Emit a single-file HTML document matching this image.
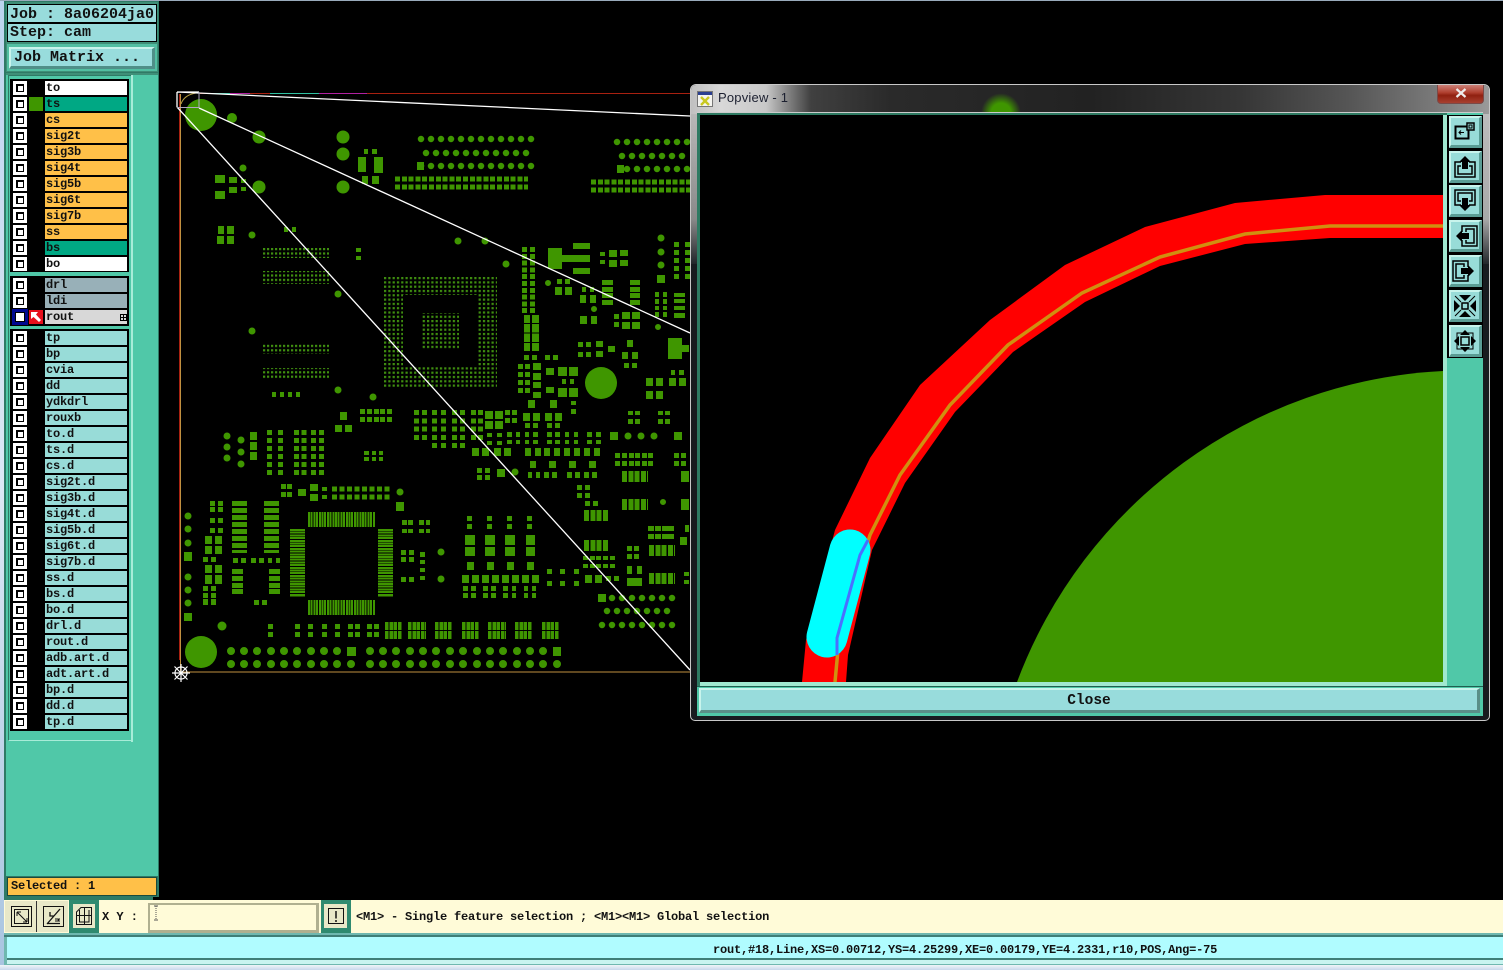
<!DOCTYPE html>
<html><head><meta charset="utf-8"><title>Popview</title>
<style>
html,body{margin:0;padding:0;background:#000;overflow:hidden}
#p{position:relative;width:1503px;height:970px;overflow:hidden;background:#000;font:bold 12px/14px "Liberation Mono",monospace;color:#111}
#p div,#p svg{position:absolute}
.t{white-space:pre;letter-spacing:-.2px}
.b{font-size:15px;line-height:18px;letter-spacing:0;white-space:pre;font-weight:bold}
.r{left:13px;width:114px;height:14px}
.r::before{content:"";position:absolute;left:0;top:0;width:14px;height:14px;box-sizing:border-box;background:#000;border:3px solid #fff}
.r::after{content:"";position:absolute;left:4.5px;top:4.5px;width:5px;height:5px;background:#fff}
.n{left:32px;top:0;width:81.500px;height:14px;padding-left:1px;box-sizing:border-box;background:#98dcd8;white-space:pre;letter-spacing:-.2px;line-height:14px}
.w{background:#fff}.g{background:#00a884}.o{background:#ffc048}.s{background:#98b0b8}.x{background:#d8d8d8}
.tb{left:1449px;width:33px;height:32px;box-sizing:border-box;background:#98dcd8;border-style:solid;border-width:2px 3px 3px 2px;border-color:#c8f4ec #5a9c94 #5a9c94 #c8f4ec}
</style></head><body><div id="p">

<!-- left desktop strip and panel -->
<div style="left:0;top:0;width:4px;height:970px;background:linear-gradient(#bcd4ee,#dce8f4 50%,#a8c4e0)"></div>
<div style="left:4px;top:0;width:155px;height:900px;background:#2f7a66"></div>
<div style="left:0;top:0;width:1503px;height:1px;background:#9ab"></div>
<div style="left:6px;top:2px;width:152px;height:70px;background:#3f8f78"></div>
<div class="b" style="left:7px;top:4px;width:150px;height:19px;box-sizing:border-box;border:1px solid #000;background:#98dcdc;padding-left:2px;line-height:19px">Job : 8a06204ja0</div>
<div class="b" style="left:7px;top:23px;width:150px;height:19px;box-sizing:border-box;border:1px solid #000;background:#98dcdc;padding-left:2px">Step: cam</div>
<div style="left:7px;top:44px;width:150px;height:27px;background:#52bfa2"></div>
<div class="b" style="left:9px;top:47px;width:146px;height:22px;box-sizing:border-box;background:#98dcdc;border-style:solid;border-width:2px 3px 3px 2px;border-color:#c8f4ec #4f8f88 #4f8f88 #c8f4ec;padding-left:3px;line-height:17px">Job Matrix ...</div>
<div style="left:6px;top:73px;width:152px;height:803px;background:#50c8a8"></div>
<div style="left:131px;top:75px;width:2px;height:667px;background:#a8ecd8"></div>
<div style="left:6px;top:73px;width:152px;height:2px;background:#3f8f78"></div>
<div style="left:8px;top:75px;width:123px;height:666px;background:#50c8a8;border:1px solid #2f7a66;border-right:0;border-bottom:1px solid #a8ecd8;box-sizing:border-box"></div>
<div style="left:10px;top:79px;width:119px;height:193px;background:#000"></div>
<div style="left:10px;top:276px;width:119px;height:50px;background:#000"></div>
<div style="left:10px;top:329px;width:119px;height:402px;background:#000"></div>

<div class="r" style="top:81px"><div class="n w">to</div></div>
<div class="r" style="top:97px"><div style="left:16px;top:0;width:14px;height:14px;background:#3f9600"></div><div class="n g">ts</div></div>
<div class="r" style="top:113px"><div class="n o">cs</div></div>
<div class="r" style="top:129px"><div class="n o">sig2t</div></div>
<div class="r" style="top:145px"><div class="n o">sig3b</div></div>
<div class="r" style="top:161px"><div class="n o">sig4t</div></div>
<div class="r" style="top:177px"><div class="n o">sig5b</div></div>
<div class="r" style="top:193px"><div class="n o">sig6t</div></div>
<div class="r" style="top:209px"><div class="n o">sig7b</div></div>
<div class="r" style="top:225px"><div class="n o">ss</div></div>
<div class="r" style="top:241px"><div class="n g">bs</div></div>
<div class="r" style="top:257px"><div class="n w">bo</div></div>

<div class="r" style="top:278px"><div class="n s">drl</div></div>
<div class="r" style="top:294px"><div class="n s">ldi</div></div>
<div style="left:12px;top:309px;width:16px;height:16px;background:#000890"></div>
<div style="left:15px;top:312px;width:10px;height:10px;background:#000"></div>
<div style="left:16px;top:313px;width:8px;height:8px;background:#fff"></div>
<div style="left:29px;top:310px;width:14px;height:14px;background:#e8101c"></div>
<svg style="left:29px;top:310px" width="14" height="14" viewBox="0 0 14 14"><path d="M2 2H9L7 4.500L12 10L10 12L4.500 7L2 9Z" fill="#fff"/></svg>
<div style="left:45px;top:310px;width:81.500px;height:14px;background:#d8d8d8;white-space:pre;letter-spacing:-.2px;padding-left:1px;box-sizing:border-box">rout</div>
<div style="left:120px;top:314px;width:5px;height:5px;border:1px solid #000;background:linear-gradient(#000,#000) center/1px 100% no-repeat,linear-gradient(#000,#000) center/100% 1px no-repeat,#d8d8d8"></div>

<div class="r" style="top:331px"><div class="n">tp</div></div>
<div class="r" style="top:347px"><div class="n">bp</div></div>
<div class="r" style="top:363px"><div class="n">cvia</div></div>
<div class="r" style="top:379px"><div class="n">dd</div></div>
<div class="r" style="top:395px"><div class="n">ydkdrl</div></div>
<div class="r" style="top:411px"><div class="n">rouxb</div></div>
<div class="r" style="top:427px"><div class="n">to.d</div></div>
<div class="r" style="top:443px"><div class="n">ts.d</div></div>
<div class="r" style="top:459px"><div class="n">cs.d</div></div>
<div class="r" style="top:475px"><div class="n">sig2t.d</div></div>
<div class="r" style="top:491px"><div class="n">sig3b.d</div></div>
<div class="r" style="top:507px"><div class="n">sig4t.d</div></div>
<div class="r" style="top:523px"><div class="n">sig5b.d</div></div>
<div class="r" style="top:539px"><div class="n">sig6t.d</div></div>
<div class="r" style="top:555px"><div class="n">sig7b.d</div></div>
<div class="r" style="top:571px"><div class="n">ss.d</div></div>
<div class="r" style="top:587px"><div class="n">bs.d</div></div>
<div class="r" style="top:603px"><div class="n">bo.d</div></div>
<div class="r" style="top:619px"><div class="n">drl.d</div></div>
<div class="r" style="top:635px"><div class="n">rout.d</div></div>
<div class="r" style="top:651px"><div class="n">adb.art.d</div></div>
<div class="r" style="top:667px"><div class="n">adt.art.d</div></div>
<div class="r" style="top:683px"><div class="n">bp.d</div></div>
<div class="r" style="top:699px"><div class="n">dd.d</div></div>
<div class="r" style="top:715px"><div class="n">tp.d</div></div>

<div style="left:6px;top:876px;width:152px;height:21px;background:#2f7a66"></div>
<div class="t" style="left:7px;top:877px;width:150px;height:19px;box-sizing:border-box;background:#ffc048;border:1px solid #1a4a3c;padding-left:3px;line-height:17px">Selected : 1</div>

<!-- PCB -->
<svg style="left:0;top:0" width="1503" height="900" viewBox="0 0 1503 900">
<defs><pattern id="d" width="4.3" height="4.3" patternUnits="userSpaceOnUse" x="384" y="277"><rect width="2.200" height="2.200" fill="#3f8f10"/></pattern>
<pattern id="e" width="4" height="4.400" patternUnits="userSpaceOnUse" x="263" y="248"><rect width="2.200" height="2.200" fill="#3f8f10"/></pattern></defs>
<g shape-rendering="crispEdges">
<path fill="url(#e)" d="M263 247H329V258H263ZM263 271H329V284H263ZM263 343H329V354H263ZM263 368H329V379H263Z"/>
<path fill="url(#d)" d="M384 277H497V295H403V367H478V295H497V388H384ZM422 313H459V349H422Z"/>
<path fill="#3f9600" d="M364 149H368V154H364ZM372 149H377V154H372ZM358 157H366V172H358ZM374 157H383V173H374ZM362 176H368V184H362ZM372 176H379V184H372Z
M215 175H225V183H215ZM215 191H225V199H215ZM229 177H237V183H229ZM229 187H237V193H229ZM241 179H246V183H241ZM241 187H246V191H241Z
M218 226H224V234H218ZM227 226H234V234H227ZM217 236H224V244H217ZM227 236H234V244H227ZM284 227H288V232H284ZM292 227H296V232H292Z
M657 275H665V283H657ZM548 248H562V269H548ZM562 255H590V262H562ZM573 243H590V249H573ZM573 268H590V274H573Z
M600 252H605V256H600ZM600 260H605V264H600ZM609 250H617V257H609ZM609 260H617V267H609ZM620 250H628V256H620ZM620 260H628V266H620Z
M524 315H530V351H524ZM532 315H539V351H532ZM524 355H529V360H524ZM532 355H537V360H532ZM545 355H550V360H545ZM553 355H558V360H553Z
M557 279H562V284H557ZM565 279H570V284H565ZM555 287H562V295H555ZM565 287H572V295H565ZM582 287H586V292H582ZM590 287H594V292H590ZM580 295H586V303H580ZM590 295H596V303H590Z
M602 280H613V285H602ZM602 287H613V292H602ZM602 293H613V298H602ZM602 300H613V305H602ZM630 280H640V285H630ZM630 287H640V292H630ZM630 293H640V298H630ZM630 300H640V305H630Z
M655 292H659V297H655ZM663 292H667V297H663ZM655 299H659V304H655ZM663 299H667V304H663ZM655 306H659V310H655ZM663 306H667V310H663ZM655 312H659V317H655ZM663 312H667V317H663Z
M674 293H685V297H674ZM674 299H685V303H674ZM674 306H685V310H674ZM674 313H685V318H674Z
M580 316H587V324H580ZM591 316H597V324H591ZM614 314H619V319H614ZM614 322H619V327H614ZM622 312H630V319H622ZM632 312H640V319H632ZM622 322H630V329H622ZM632 322H640V329H632Z
M668 338H682V359H668ZM682 345H689V352H682ZM578 342H583V347H578ZM586 342H591V347H586ZM578 352H583V357H578ZM586 352H591V357H586ZM596 341H603V347H596ZM596 351H603V357H596ZM608 346H615V352H608ZM627 340H633V347H627ZM622 352H628V359H622ZM632 352H638V359H632ZM624 363H629V368H624ZM632 363H637V368H632Z
M518 364H523V369H518ZM525 364H530V369H525ZM533 363H541V370H533ZM518 372H523V377H518ZM525 372H530V377H525ZM533 373H541V380H533ZM518 380H523V385H518ZM525 380H530V385H525ZM533 382H541V388H533ZM518 388H523V393H518ZM525 388H530V393H525ZM533 392H541V398H533Z
M546 368H554V375H546ZM546 387H554V393H546ZM558 367H567V376H558ZM569 367H578V376H569ZM562 379H566V384H562ZM570 379H574V384H570ZM558 388H567V397H558ZM569 388H578V397H569Z
M646 378H653V386H646ZM656 378H663V386H656ZM646 391H653V399H646ZM656 391H663V399H656ZM671 370H675V375H671ZM679 370H684V375H679ZM669 378H676V386H669ZM679 378H686V386H679Z
M340 412H347V420H340ZM335 425H342V432H335ZM345 425H352V432H345ZM356 248H361V252H356ZM356 256H361V260H356ZM272 392H276V397H272ZM280 392H284V397H280ZM288 392H292V397H288ZM296 392H300V397H296ZM250 432H257V440H250ZM250 442H257V450H250ZM250 452H257V460H250Z
M360 409H365V414H360ZM367 409H372V414H367ZM374 409H379V414H374ZM380 409H385V414H380ZM387 409H392V414H387ZM360 417H365V422H360ZM367 417H372V422H367ZM374 417H379V422H374ZM380 417H385V422H380ZM387 417H392V422H387Z
M485 411H493V419H485ZM495 411H503V419H495ZM485 421H493V429H485ZM495 421H503V429H495ZM505 410H510V415H505ZM512 410H517V415H512ZM505 418H510V423H505ZM512 418H517V423H512Z
M472 448H479V456H472ZM482 448H489V456H482ZM494 448H501V456H494ZM504 448H511V456H504ZM487 433H492V437H487ZM497 433H502V437H497ZM487 441H492V445H487ZM497 441H502V445H497ZM507 432H512V437H507ZM516 432H520V437H516ZM507 440H512V444H507ZM516 440H520V444H516Z
M525 432H529V437H525ZM533 432H538V437H533ZM547 432H552V437H547ZM555 432H560V437H555ZM565 432H569V437H565ZM574 432H578V437H574ZM587 432H592V437H587ZM596 432H601V437H596ZM525 440H529V444H525ZM533 440H538V444H533ZM547 440H552V444H547ZM555 440H560V444H555ZM565 440H569V444H565ZM574 440H578V444H574ZM587 440H592V444H587ZM596 440H601V444H596Z
M525 448H531V456H525ZM535 448H541V456H535ZM544 448H550V456H544ZM554 448H560V456H554ZM564 448H570V456H564ZM574 448H580V456H574ZM584 448H590V456H584ZM594 448H600V456H594Z
M530 461H536V468H530ZM549 461H556V468H549ZM569 461H576V468H569ZM589 461H596V468H589ZM528 472H532V478H528ZM536 472H540V478H536ZM544 472H549V478H544ZM552 472H557V478H552ZM567 472H572V478H567ZM575 472H580V478H575ZM584 472H589V478H584ZM592 472H597V478H592Z
M477 468H482V473H477ZM485 468H490V473H485ZM477 475H482V480H477ZM485 475H490V480H485ZM497 469H505V477H497ZM528 400H535V408H528ZM550 400H557V408H550ZM571 401H576V405H571ZM571 409H576V414H571ZM523 413H530V421H523ZM533 413H540V421H533ZM545 413H552V421H545ZM555 413H562V421H555ZM525 423H530V428H525ZM533 423H538V428H533ZM547 423H552V428H547ZM555 423H560V428H555Z
M628 411H633V415H628ZM635 411H640V415H635ZM628 419H633V424H628ZM635 419H640V424H635ZM658 411H663V415H658ZM665 411H670V415H665ZM658 419H663V424H658ZM665 419H670V424H665ZM610 432H618V440H610ZM674 432H682V440H674Z
M615 453H620V458H615ZM622 453H627V458H622ZM629 453H634V458H629ZM635 453H640V458H635ZM642 453H647V458H642ZM648 453H653V458H648ZM615 461H620V466H615ZM622 461H627V466H622ZM629 461H634V466H629ZM635 461H640V466H635ZM642 461H647V466H642ZM648 461H653V466H648ZM674 453H679V458H674ZM681 453H686V458H681ZM674 461H679V466H674ZM681 461H686V466H681Z
M681 471H689V482H681ZM681 499H689V510H681ZM577 485H582V490H577ZM585 485H590V490H585ZM577 493H582V498H577ZM585 493H590V498H585ZM585 501H590V506H585ZM593 501H598V506H593Z
M467 516H472V521H467ZM487 516H492V521H487ZM507 516H512V521H507ZM527 516H532V521H527ZM467 524H472V529H467ZM487 524H492V529H487ZM507 524H512V529H507ZM527 524H532V529H527Z
M465 535H475V545H465ZM485 535H495V545H485ZM505 535H515V545H505ZM526 535H535V545H526ZM465 547H475V556H465ZM485 547H495V556H485ZM505 547H515V556H505ZM526 547H535V556H526ZM467 562H474V570H467ZM487 562H494V570H487ZM507 562H514V570H507ZM527 562H534V570H527Z
M462 575H469V583H462ZM472 575H479V583H472ZM482 575H489V583H482ZM492 575H499V583H492ZM502 575H509V583H502ZM512 575H519V583H512ZM522 575H529V583H522ZM532 575H539V583H532Z
M463 586H468V591H463ZM471 586H476V591H471ZM483 586H488V591H483ZM491 586H496V591H491ZM503 586H508V591H503ZM512 586H516V591H512ZM524 586H528V591H524ZM532 586H536V591H532ZM463 593H468V598H463ZM471 593H476V598H471ZM483 593H488V598H483ZM491 593H496V598H491ZM503 593H508V598H503ZM512 593H516V598H512ZM524 593H528V598H524ZM532 593H536V598H532Z
M547 569H552V574H547ZM560 569H565V574H560ZM574 569H579V574H574ZM547 581H552V586H547ZM560 581H565V586H560ZM574 581H579V586H574Z
M583 556H588V560H583ZM590 556H595V560H590ZM596 556H601V560H596ZM603 556H608V560H603ZM610 556H615V560H610ZM583 564H588V568H583ZM590 564H595V568H590ZM596 564H601V568H596ZM603 564H608V568H603ZM610 564H615V568H610ZM585 575H592V583H585ZM595 575H602V583H595ZM606 576H611V581H606ZM614 576H619V581H614Z
M627 546H632V551H627ZM634 546H639V551H634ZM627 554H632V559H627ZM634 554H639V559H634ZM648 526H654V531H648ZM655 526H661V531H655ZM662 526H668V531H662ZM668 526H674V531H668ZM648 534H654V539H648ZM655 534H661V539H655ZM662 534H668V539H662ZM668 534H674V539H668Z
M627 566H632V574H627ZM637 566H642V574H637ZM627 578H642V586H627ZM684 572H689V576H684ZM684 580H689V584H684ZM680 537H687V545H680ZM685 525H689V532H685ZM598 594H606V602H598ZM347 647H356V656H347Z
M184 552H192V561H184ZM184 613H192V621H184ZM210 501H215V506H210ZM218 501H223V506H218ZM210 507H215V512H210ZM218 507H223V512H218ZM210 518H215V523H210ZM218 518H223V523H218ZM210 528H215V533H210ZM218 528H223V533H218Z
M205 536H212V544H205ZM215 536H222V544H215ZM205 546H212V554H205ZM215 546H222V554H215ZM203 557H208V562H203ZM211 557H216V562H211ZM205 565H212V573H205ZM215 565H222V573H215ZM205 575H212V584H205ZM215 575H222V584H215ZM203 586H208V591H203ZM211 586H216V591H211ZM203 593H208V598H203ZM211 593H216V598H211ZM203 599H208V605H203ZM211 599H216V605H211Z
M233 558H238V563H233ZM241 558H246V563H241ZM251 558H256V563H251ZM259 558H264V563H259ZM268 558H272V563H268ZM276 558H280V563H276ZM232 569H243V574H232ZM232 576H243V581H232ZM232 583H243V588H232ZM232 589H243V594H232ZM269 569H280V574H269ZM269 576H280V581H269ZM269 583H280V588H269ZM269 589H280V594H269ZM254 600H259V605H254ZM262 600H267V605H262Z
M281 484H286V489H281ZM287 484H292V489H287ZM281 492H286V497H281ZM287 492H292V497H287ZM298 489H306V496H298ZM310 484H318V491H310ZM310 494H318V501H310ZM322 487H327V491H322ZM322 495H327V499H322ZM396 502H404V511H396Z
M402 520H407V525H402ZM408 520H413V525H408ZM419 520H424V525H419ZM426 520H430V525H426ZM402 529H407V533H402ZM408 529H413V533H408ZM419 529H424V533H419ZM426 529H430V533H426ZM401 550H406V555H401ZM409 550H414V555H409ZM401 557H406V562H401ZM409 557H414V562H409ZM420 552H425V557H420ZM420 560H425V564H420ZM420 568H425V572H420ZM420 576H425V580H420ZM401 577H406V582H401ZM409 577H414V582H409Z
M268 624H273V629H268ZM295 624H300V629H295ZM308 624H313V629H308ZM322 624H327V629H322ZM335 624H340V629H335ZM348 624H353V629H348ZM355 624H360V629H355ZM367 624H372V629H367ZM374 624H379V629H374ZM268 632H273V637H268ZM295 632H300V637H295ZM308 632H313V637H308ZM322 632H327V637H322ZM335 632H340V637H335ZM348 632H353V637H348ZM355 632H360V637H355ZM367 632H372V637H367ZM374 632H379V637H374Z
M553 647H561V656H553ZM364 451H369V455H364ZM372 451H376V455H372ZM379 451H383V455H379ZM364 457H369V461H364ZM372 457H376V461H372ZM379 457H383V461H379Z"/>
<g fill="none" stroke="#3f9600">
<path stroke-width="5" stroke-dasharray="5 1.800" d="M395 179H528M395 187H528M591 182H690M591 190H690"/>
<path stroke-width="5" stroke-dasharray="5 1.800" d="M524.500 247V313M532.500 247V313"/>
<path stroke-width="5" stroke-dasharray="5 3" d="M676.500 242V280M687.500 242V280"/>
<path stroke-width="5" stroke-dasharray="5 3" d="M269.500 430V475M280.500 430V475M296.500 430V475M304 430V475M313.500 430V475M321.500 430V475"/>
<path stroke-width="5" stroke-dasharray="5 3.300" d="M416.500 410V440M424.500 410V440M434.500 410V448M443.500 410V448M454.500 410V448M462.500 410V448M473.500 410V440M480.500 410V440"/>
<path stroke-width="15" stroke-dasharray="5 2" d="M239.500 501V553M271.500 501V553"/>
<path stroke-width="5" stroke-dasharray="5 2.500" d="M332 489H392M332 497H392"/>
<path stroke-width="15" stroke-dasharray="2 .7" d="M308 519.500H375M308 607.500H375"/>
<path stroke-width="15" stroke-dasharray="2 .7" d="M297.500 529V597M385.500 529V597"/>
<g stroke-width="8" stroke-dasharray="3.500 .8">
<path d="M385 626H402M385 635H402M408 626H426M408 635H426M435 626H452M435 635H452M462 626H479M462 635H479M488 626H506M488 635H506M515 626H532M515 635H532M542 626H559M542 635H559"/></g>
<g stroke-width="11" stroke-dasharray="5 1.300">
<path d="M622 476.500H648M622 504.500H648M584 515.500H608M584 545.500H608M649 550.500H675M649 578.500H675"/></g>
<path stroke-width="1" stroke="#000" d="M524 323.500H539M524 333H539M524 342.500H539"/>
</g>
</g>
<g fill="none" stroke="#3f9600" stroke-linecap="round">
<path stroke-width="32" d="M201 115h.01M201 652h.01M601 383h.01"/>
<path stroke-width="13" d="M259 137h.01M259 187h.01M343 137h.01M343 154h.01M343 187h.01"/>
<path stroke-width="10" d="M232 118h.01"/>
<path stroke-width="7" d="M243 168h.01M252 235h.01M338 294h.01M252 331h.01M338 390h.01M373 397h.01M458 241h.01M485 241h.01M506 264h.01M227 436h.01M227 447h.01M227 458h.01M241 440h.01M241 452h.01M241 464h.01M188 516h.01M188 529h.01M188 543h.01M188 577h.01M188 590h.01M188 603h.01M400 492h.01M441 552h.01M441 579h.01M515 472h.01M628 436h.01M641 436h.01M654 436h.01M661 238h.01M661 252h.01M661 265h.01"/>
<path stroke-width="9" d="M222 626h.01"/>
<path stroke-width="6" d="M548 283h.01M594 309h.01M658 327h.01M663 502h.01"/>
<path stroke-width="6.500" stroke-dasharray="0 10" d="M421 139H532M426 153H527M421 166H532M617 142H688M622 156H683M627 169H688M612 598H673M607 611H668M602 625H673"/>
<path stroke-width="8" d="M231 651h.01M244 651h.01M257 651h.01M271 651h.01M284 651h.01M297 651h.01M311 651h.01M324 651h.01M337 651h.01M370 651h.01M383 651h.01M396 651h.01M410 651h.01M423 651h.01M436 651h.01M450 651h.01M463 651h.01M477 651h.01M490 651h.01M503 651h.01M517 651h.01M530 651h.01M543 651h.01M231 664h.01M244 664h.01M257 664h.01M271 664h.01M284 664h.01M297 664h.01M311 664h.01M324 664h.01M337 664h.01M351 664h.01M370 664h.01M383 664h.01M396 664h.01M410 664h.01M423 664h.01M436 664h.01M450 664h.01M463 664h.01M477 664h.01M490 664h.01M503 664h.01M517 664h.01M530 664h.01M543 664h.01M557 664h.01"/>
</g>
<rect x="417" y="162" width="7" height="8" fill="#3f9600"/>
<rect x="617" y="165" width="7" height="8" fill="#3f9600"/>
<!-- outline and traces -->
<g fill="none">
<path stroke="#a82010" d="M179.500 94V660"/>
<path stroke="#c09040" d="M180.500 94V672H690"/>
<path stroke="#a82010" d="M200 93.500H690"/>
<path stroke="#30c0a0" d="M210 93.500H230M270 93.500H319"/>
<path stroke="#b020a0" d="M230 93.500H250M319 93.500H367"/>
<path stroke="#b8a040" d="M181 104Q184 95 196 93"/>
<path stroke="#fff" stroke-width="1.300" d="M177 92H199M177 92V107M177 92L690 116M177 107L690 670M199 108L690 333"/>
<path stroke="#b0a8c0" d="M177 107.500H199V92"/>
</g>
<g fill="none" stroke="#fff" stroke-width="1.200"><circle cx="181" cy="673" r="6"/><path d="M172 673H190M181 664V682M174.500 666.500L187.500 679.500M174.500 679.500L187.500 666.500"/></g>
</svg>

<!-- Popview window -->
<div style="left:690px;top:84px;width:800px;height:637px;box-sizing:border-box;border:1px solid #c8c8c8;border-radius:6px 6px 5px 5px;background:#181b1f;overflow:hidden">
  <div style="left:0;top:0;width:798px;height:29px;background:linear-gradient(90deg,#c0c0c0 0,#d8d8d8 30px,#c8c8c8 75px,#7a7a7a 100px,#404040 120px,#2a2a2a 200px,#222 400px,#363636 550px,#565656 660px,#7a7a7a 745px,#9a9a9a 798px)"></div>
  <div style="left:290px;top:8px;width:40px;height:40px;border-radius:50%;background:radial-gradient(#3f9600 35%,rgba(63,150,0,0) 70%)"></div>
  <div style="left:0;top:29px;width:6px;height:150px;background:linear-gradient(#b8b8b8,#8a8a8a 70%,#22262a)"></div>
  <div style="left:792px;top:29px;width:6px;height:150px;background:linear-gradient(#bcbcbc,#a8a8a8 70%,#22262a)"></div>
  <div style="left:746px;top:-1px;width:47px;height:20px;box-sizing:border-box;border:1px solid #7a4a48;border-top:0;border-radius:0 0 4px 4px;background:linear-gradient(#d08880,#b04030 45%,#902010 60%,#a84030)"></div>
  <svg style="left:764px;top:3px" width="12" height="10" viewBox="0 0 12 10"><path d="M1.500 1L10.500 9M10.500 1L1.500 9" stroke="#eee" stroke-width="2.200"/></svg>
  <svg style="left:6px;top:6px" width="16" height="16" viewBox="0 0 16 16"><rect x=".5" y=".5" width="15" height="15" fill="#f4f4f0" stroke="#777"/><rect x="1" y="1" width="14" height="3" fill="#2a3f90"/><path d="M4 6L12 14M12 6L4 14" stroke="#c8c820" stroke-width="2.400"/></svg>
  <div style="left:27px;top:5px;font:13px/16px 'Liberation Sans',sans-serif;color:#1c2030;letter-spacing:.2px;white-space:pre">Popview - 1</div>
</div>
<div style="left:697px;top:112px;width:786px;height:604px;background:#50c8a8;border-top:1px solid #ccc;box-sizing:border-box"></div>
<div style="left:697px;top:113px;width:750px;height:573px;box-sizing:border-box;background:#2e7a62"></div>
<div style="left:700px;top:115px;width:747px;height:571px;background:#a0e8d0"></div>
<svg style="left:700px;top:115px" width="743" height="567" viewBox="700 115 743 567">
<rect x="700" y="115" width="743" height="567" fill="#000"/>
<path fill="#3f9600" d="M1017 682A480 480 0 0 1 1443 371V682Z"/>
<path fill="#f00" d="M802 682L806 640L835 530L870 458L920 385L990 320L1065 265L1145 227L1235 203L1325 195H1443V238H1330L1245 244L1160 266L1085 302L1013 352L955 412L905 483L872 550L848 655L846 682Z"/>
<path fill="none" stroke="#d09010" stroke-width="3.500" d="M835 682L838 650L866 548L870 535L900 475L950 405L1008 345L1082 293L1160 257L1245 234L1330 226H1443"/>
<path fill="none" stroke="#0ff" stroke-width="41" stroke-linecap="round" d="M850 550L827 637"/>
<path fill="none" stroke="#4a70ff" stroke-width="3" d="M868 540L860 555L837 638V655"/>
</svg>
<div style="left:1447px;top:115px;width:36px;height:243px;background:#000"></div>
<div class="tb" style="top:116px"></div><div class="tb" style="top:151px"></div><div class="tb" style="top:185px"></div><div class="tb" style="top:220px"></div><div class="tb" style="top:255px"></div><div class="tb" style="top:290px"></div><div class="tb" style="top:325px"></div>
<svg style="left:1440px;top:110px" width="50" height="250" viewBox="1440 110 50 250" fill="none" stroke="#000" stroke-width="1.500">
<g><rect x="1455.500" y="126.500" width="13" height="12" stroke-width="2"/><path fill="#98dcd8" stroke-width="1.500" d="M1467 123h7v7h-7z"/><path stroke-width="1" d="M1469 125h3v3h-3zM1459 132.500h5M1461 130.500l-2 2 2 2"/></g>
<g transform="translate(1465 166)"><path d="M-4-4H-10V11H10V-4H4M-4 0H-7V8H7V0H4"/><path fill="#000" stroke="none" d="M0-10L6-4H3V3H-3V-4H-6Z"/></g>
<g transform="translate(1465 201) rotate(180)"><path d="M-4-4H-10V11H10V-4H4M-4 0H-7V8H7V0H4"/><path fill="#000" stroke="none" d="M0-10L6-4H3V3H-3V-4H-6Z"/></g>
<g transform="translate(1466 236) rotate(-90)"><path d="M-4-4H-10V11H10V-4H4M-4 0H-7V8H7V0H4"/><path fill="#000" stroke="none" d="M0-10L6-4H3V3H-3V-4H-6Z"/></g>
<g transform="translate(1464 271) rotate(90)"><path d="M-4-4H-10V11H10V-4H4M-4 0H-7V8H7V0H4"/><path fill="#000" stroke="none" d="M0-10L6-4H3V3H-3V-4H-6Z"/></g>
<g transform="translate(1465 306)"><rect x="-3" y="-3" width="6" height="6"/><path stroke-width="1" d="M-10-10L-4-4M10-10L4-4M-10 10L-4 4M10 10L4 4"/><path fill="#000" stroke="none" d="M-6-11H6L0-5ZM-6 11H6L0 5ZM-11-6V6L-5 0ZM11-6V6L5 0Z"/></g>
<g transform="translate(1465 341)"><rect x="-4" y="-4" width="8" height="8"/><path stroke-width="1" d="M-8-8H8V8H-8Z"/><path fill="#000" stroke="none" d="M0-11L5-6H-5ZM0 11L5 6H-5ZM-11 0L-6-5V5ZM11 0L6-5V5Z"/></g>
</svg>
<div style="left:697px;top:686px;width:786px;height:1px;background:#1f5f50"></div>
<div class="b" style="left:699px;top:688px;width:781px;height:25px;box-sizing:border-box;background:#98dcdc;border-style:solid;border-width:2px 3px 3px 2px;border-color:#c8f4ec #5a8f88 #5a8f88 #c8f4ec;text-align:center;line-height:22px;font-size:14.500px">Close</div>

<!-- Bottom bar -->
<div style="left:4px;top:897px;width:1499px;height:38px;background:#fffbd8"></div>
<div style="left:4px;top:897px;width:1499px;height:3px;background:#2f7a66"></div>
<div style="left:153px;top:897px;width:1350px;height:3px;background:#000"></div>
<div style="left:5px;top:901px;width:31px;height:31px;background:#e8e8c8;border-right:1px solid #333"></div>
<div style="left:37px;top:901px;width:31px;height:31px;background:#e8e8c8"></div>
<div style="left:69px;top:900px;width:30px;height:33px;background:#2f8a70"></div>
<div style="left:73px;top:904px;width:22px;height:24px;background:#e8e8c8"></div>
<div style="left:148px;top:903px;width:171px;height:30px;box-sizing:border-box;background:#fffbd8;border:2px solid #b0b090;border-right-width:3px;border-bottom-width:3px"></div>
<div style="left:321px;top:900px;width:30px;height:33px;background:#2f8a70"></div>
<div style="left:324px;top:904px;width:23px;height:24px;background:#e8e8c8"></div>
<svg style="left:0;top:897px" width="360" height="40" viewBox="0 897 360 40" fill="none" stroke="#111">
<path d="M11.500 906.500H31.500V926.500H11.500ZM14.500 909.500H28.500V923.500H14.500Z"/><path d="M17 912L27 922M17 912h4M17 912v4M27 922h-4M27 922v-4"/>
<path d="M43.500 906.500H63.500V926.500H43.500Z"/><path stroke-width="1.300" d="M47 924L60 909M47 923.500H60M50 912v4h4"/><path d="M55 919h3l1 2h1M55 921h3l1-2h1" stroke-width="1"/>
<path d="M76.500 912L81 907.500H91.500V924.500H76.500ZM76.500 915.500H91.500M84.500 907.500V924.500M79.500 910V922H89V910" stroke-width="1"/>
<path d="M328.500 908.500H343.500V923.500H328.500Z"/><path stroke-width="1.500" d="M336 911V918.500M336 920V922"/>
<path stroke="#555" stroke-dasharray="1 1" d="M156 906V920"/><path stroke="#555" d="M154 906h4M154 920h4"/>
</svg>
<div class="t" style="left:102px;top:910px;font-size:12px;letter-spacing:0">X Y :</div>
<div class="t" style="left:356px;top:910px">&lt;M1&gt; - Single feature selection ; &lt;M1&gt;&lt;M1&gt; Global selection</div>

<!-- Status -->
<div style="left:4px;top:933px;width:1499px;height:32px;background:#6fb8b0"></div>
<div style="left:4px;top:935px;width:1499px;height:2px;background:#3f7f78"></div>
<div style="left:7px;top:937px;width:1496px;height:21px;background:#b0fcff"></div>
<div style="left:7px;top:958px;width:1496px;height:2px;background:#3f7f78"></div>
<div style="left:7px;top:960px;width:1496px;height:4px;background:#c8f4f0"></div>
<div style="left:0;top:965px;width:1503px;height:5px;background:linear-gradient(#f0f4f8,#c8d8ec)"></div>
<div class="t" style="left:713px;top:943px">rout,#18,Line,XS=0.00712,YS=4.25299,XE=0.00179,YE=4.2331,r10,POS,Ang=-75</div>
</div></body></html>
